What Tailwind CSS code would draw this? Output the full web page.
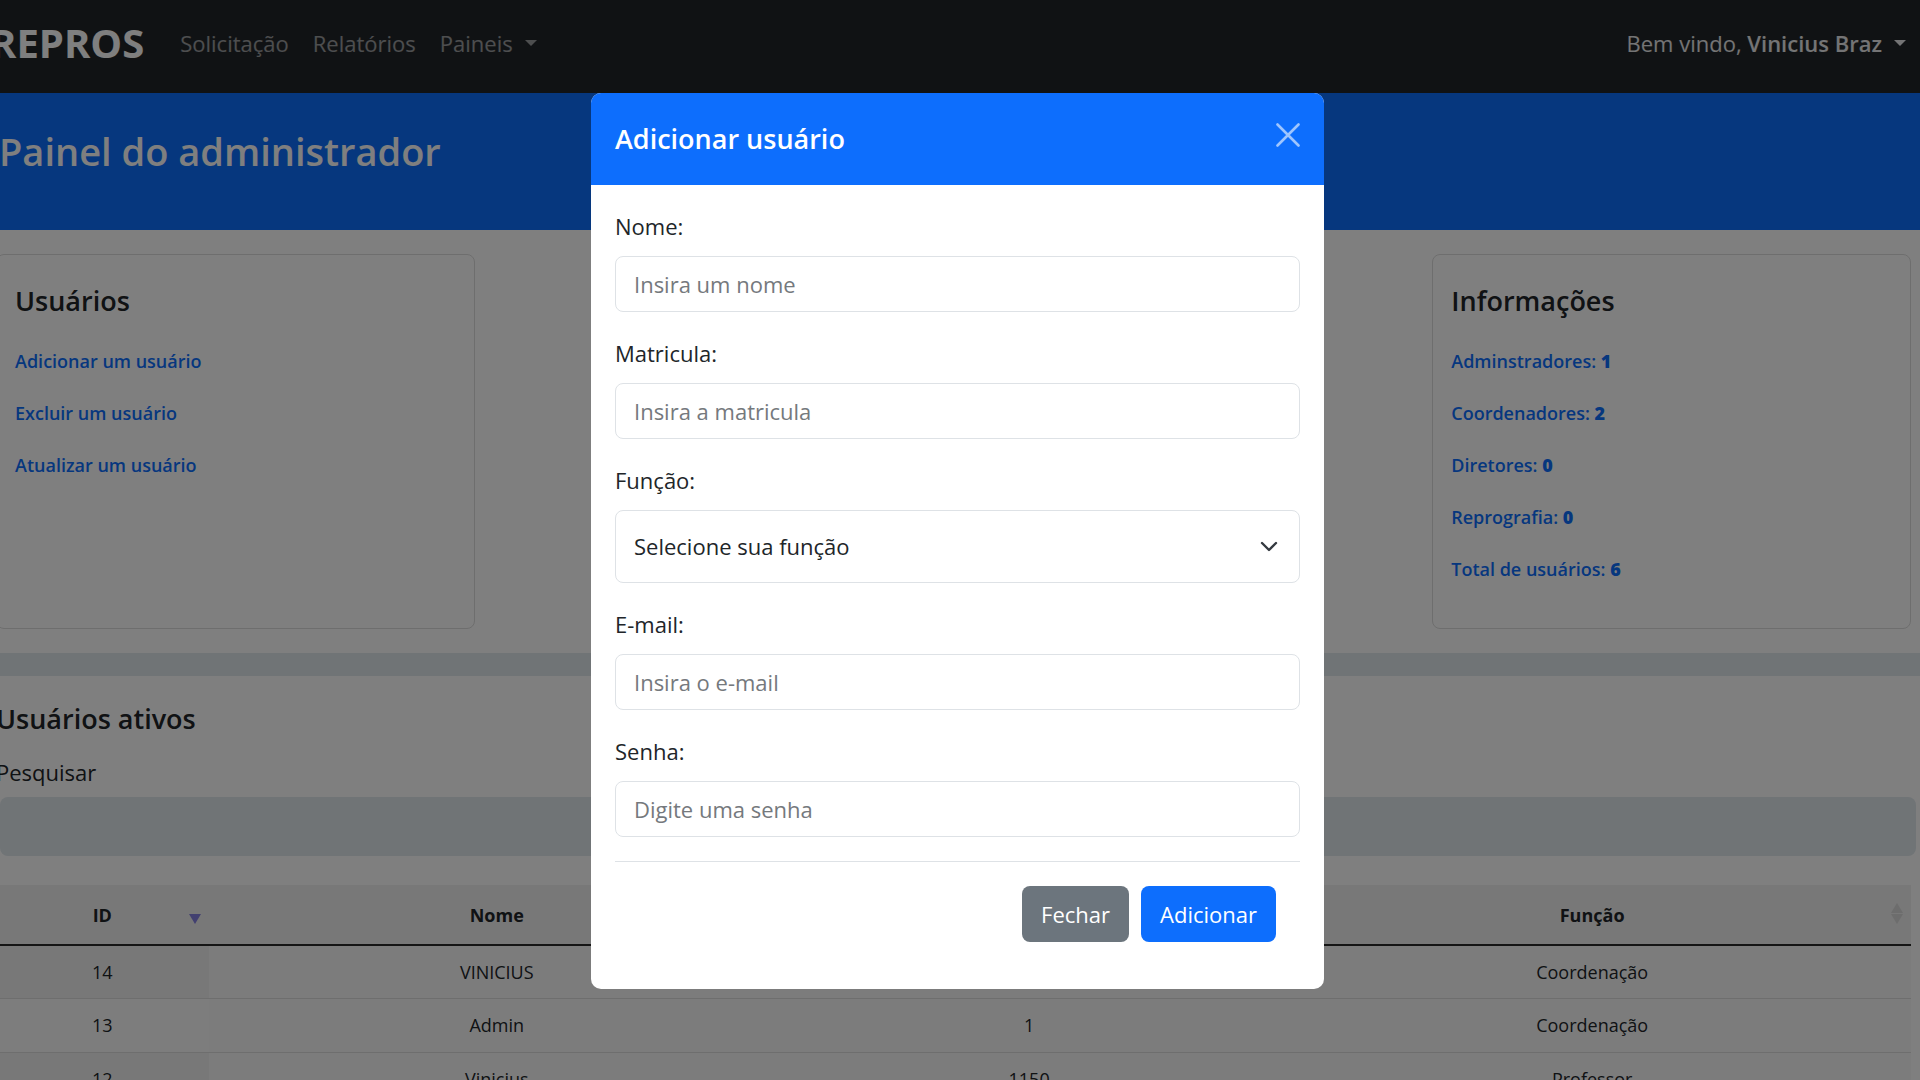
<!DOCTYPE html>
<html lang="pt-BR">
<head>
<meta charset="utf-8">
<meta name="viewport" content="width=device-width, initial-scale=1">
<title>REPROS - Painel do administrador</title>
<script src="https://cdn.jsdelivr.net/npm/@tailwindcss/browser@4"></script>
</head>
<body class="h-screen overflow-hidden bg-white font-['Open_Sans','Noto_Sans',sans-serif] text-[22px] leading-[35px] text-[#212529]">

  <!-- Navigation -->
  <nav class="flex h-[93px] items-center bg-[#212529] pr-[14px] pb-[7px]">
    <a href="#" class="-ml-[10px] text-[40px] leading-[60px] font-bold text-white">REPROS</a>
    <div class="ml-9 flex flex-1 items-center gap-6 text-white/55">
      <a href="#">Solicitação</a>
      <a href="#">Relatórios</a>
      <button type="button" class="flex items-center gap-3">Paineis
        <svg class="h-[6px] w-3" viewBox="0 0 12 6" fill="currentColor" aria-hidden="true"><path d="M0 0h12L6 6z"/></svg>
      </button>
    </div>
    <button type="button" class="flex items-center gap-3 text-white/90">
      <span>Bem vindo, <strong class="font-semibold">Vinicius Braz</strong></span>
      <svg class="h-[6px] w-3" viewBox="0 0 12 6" fill="currentColor" aria-hidden="true"><path d="M0 0h12L6 6z"/></svg>
    </button>
  </nav>

  <header class="h-[137px] bg-[#0d6efd] pt-7">
    <h1 class="-ml-px text-[38px] leading-[60px] font-semibold text-white">Painel do administrador</h1>
  </header>

  <main>
    <!-- Summary cards -->
    <div class="-ml-1 mr-[9px] flex justify-between py-6">
      <section class="h-[375px] w-1/4 rounded-lg border border-[#dcdcdc] px-[18px] pt-7">
        <h2 class="text-[27px] leading-[36px] font-semibold">Usuários</h2>
        <ul class="mt-4 text-[18px] leading-[52px] font-semibold text-[#0d6efd]">
          <li><a href="#">Adicionar um usuário</a></li>
          <li><a href="#">Excluir um usuário</a></li>
          <li><a href="#">Atualizar um usuário</a></li>
        </ul>
      </section>
      <section class="h-[375px] w-1/4 rounded-lg border border-[#dcdcdc] px-[18px] pt-7">
        <h2 class="text-[27px] leading-[36px] font-semibold">Informações</h2>
        <ul class="mt-4 text-[18px] leading-[52px] font-semibold text-[#0d6efd]">
          <li>Adminstradores: <b>1</b></li>
          <li>Coordenadores: <b>2</b></li>
          <li>Diretores: <b>0</b></li>
          <li>Reprografia: <b>0</b></li>
          <li>Total de usuários: <b>6</b></li>
        </ul>
      </section>
    </div>

    <div class="h-[23px] bg-[#e0e8ed]"></div>

    <!-- Active users -->
    <section class="pt-[23px]">
      <h2 class="-ml-1 text-[27px] leading-[40px] font-semibold">Usuários ativos</h2>
      <label for="pesquisar" class="mt-4 -ml-1 block">Pesquisar</label>
      <input id="pesquisar" type="text" class="mt-[7px] block h-[59px] w-[calc(100%-4px)] rounded-lg bg-[#e0e8ed] px-4">
      <div class="mt-[29px] -ml-1 mr-[9px]">
        <table class="w-full table-fixed border-collapse text-center text-[18px] leading-[26px]">
          <colgroup>
            <col class="w-[11.1%]"><col class="w-[30.1%]"><col class="w-[25.5%]"><col class="w-[33.3%]">
          </colgroup>
          <thead>
            <tr class="h-[60px] border-b-2 border-[#2b2b2b] bg-[#f0f0f0]">
              <th class="relative font-bold">ID
                <svg class="absolute top-[18px] right-2 h-[21px] w-3" viewBox="0 0 12 21" aria-hidden="true"><path d="M0 11h12L6 21z" fill="#8480e0"/></svg>
              </th>
              <th class="relative font-bold">Nome
                <svg class="absolute top-[18px] right-2 h-[21px] w-3" viewBox="0 0 12 21" aria-hidden="true"><path d="M0 10h12L6 0zM0 11h12L6 21z" fill="#dadada"/></svg>
              </th>
              <th class="relative font-bold" aria-label="Matricula">
                <svg class="absolute top-[18px] right-2 h-[21px] w-3" viewBox="0 0 12 21" aria-hidden="true"><path d="M0 10h12L6 0zM0 11h12L6 21z" fill="#dadada"/></svg>
              </th>
              <th class="relative font-bold">Função
                <svg class="absolute top-[18px] right-2 h-[21px] w-3" viewBox="0 0 12 21" aria-hidden="true"><path d="M0 10h12L6 0zM0 11h12L6 21z" fill="#dadada"/></svg>
              </th>
            </tr>
          </thead>
          <tbody>
            <tr class="h-[53px] border-b border-[#dcdcdc] bg-[#f9f9f9]"><td class="bg-[#f1f1f1]">14</td><td>VINICIUS</td><td></td><td>Coordenação</td></tr>
            <tr class="h-[54px] border-b border-[#dcdcdc] bg-[#f9f9f9]"><td class="bg-[#fafafa]">13</td><td>Admin</td><td>1</td><td>Coordenação</td></tr>
            <tr class="h-[54px] border-b border-[#dcdcdc] bg-[#f9f9f9]"><td class="bg-[#f1f1f1]">12</td><td>Vinicius</td><td>1150</td><td>Professor</td></tr>
          </tbody>
        </table>
      </div>
    </section>
  </main>

  <!-- Backdrop and dialog -->
  <div class="fixed inset-0 flex items-start justify-center overflow-hidden bg-black/50 pt-[93px] pr-[5px]">
    <div role="dialog" aria-modal="true" aria-labelledby="modal-title" class="w-full max-w-[733px] overflow-hidden rounded-[10px] bg-white">
      <div class="flex h-[92px] items-center justify-between bg-[#0d6efd] px-6">
        <h2 id="modal-title" class="text-[27px] leading-[40px] font-semibold text-white">Adicionar usuário</h2>
        <button type="button" aria-label="Fechar janela" class="mb-2 text-white/60">
          <svg class="size-6" viewBox="0 0 24 24" fill="none" stroke="currentColor" stroke-width="2.6" stroke-linecap="round"><path d="M1.5 1.5l21 21M22.5 1.5l-21 21"/></svg>
        </button>
      </div>
      <form class="px-6 pt-6 pb-[47px]">
        <div class="flex flex-col gap-6">
          <div>
            <label for="nome" class="mb-3 block">Nome:</label>
            <input id="nome" type="text" placeholder="Insira um nome" class="block h-14 w-full rounded-lg border border-[#dee2e6] px-[18px] placeholder:text-[#75797d]">
          </div>
          <div>
            <label for="matricula" class="mb-3 block">Matricula:</label>
            <input id="matricula" type="text" placeholder="Insira a matricula" class="block h-14 w-full rounded-lg border border-[#dee2e6] px-[18px] placeholder:text-[#75797d]">
          </div>
          <div>
            <label for="funcao" class="mb-3 block">Função:</label>
            <div class="relative">
              <select id="funcao" class="block h-[73px] w-full appearance-none rounded-lg border border-[#dee2e6] bg-white px-[18px]">
                <option>Selecione sua função</option>
                <option>Coordenação</option>
                <option>Professor</option>
              </select>
              <svg class="pointer-events-none absolute top-[31px] right-[22px] h-3 w-[18px]" viewBox="0 0 18 12" fill="none" stroke="#343a40" stroke-width="2.4" stroke-linecap="round" stroke-linejoin="round" aria-hidden="true"><path d="M2 2l7 7 7-7"/></svg>
            </div>
          </div>
          <div>
            <label for="email" class="mb-3 block">E-mail:</label>
            <input id="email" type="email" placeholder="Insira o e-mail" class="block h-14 w-full rounded-lg border border-[#dee2e6] px-[18px] placeholder:text-[#75797d]">
          </div>
          <div>
            <label for="senha" class="mb-3 block">Senha:</label>
            <input id="senha" type="password" placeholder="Digite uma senha" class="block h-14 w-full rounded-lg border border-[#dee2e6] px-[18px] placeholder:text-[#75797d]">
          </div>
        </div>
        <div class="mt-6 flex justify-end gap-3 border-t border-[#dee2e6] pt-6 pr-6">
          <button type="button" class="h-14 rounded-lg bg-[#6c757d] px-[19px] text-white">Fechar</button>
          <button type="submit" class="h-14 rounded-lg bg-[#0d6efd] px-[19px] text-white">Adicionar</button>
        </div>
      </form>
    </div>
  </div>
</body>
</html>
